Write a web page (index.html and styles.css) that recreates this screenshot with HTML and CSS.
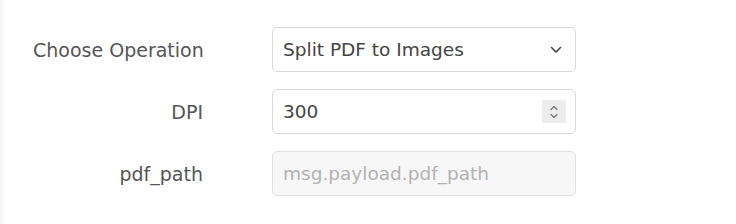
FILE: index.html
```html
<!DOCTYPE html>
<html>
	<head>
		<meta charset="UTF-8">
		<title>Split PDF</title>
		<link rel="stylesheet" href="styles.css">
	</head>
	<body>
		<div class="form">
			<label class="form-label">Choose Operation</label>
			<div class="form-field form-select">
				<span class="field-text">Split PDF to Images</span>
				<svg class="select-arrow" width="12" height="8" viewBox="0 0 12 8">
					<path d="M1.5 1.5 L6 6 L10.5 1.5" fill="none" stroke="#444" stroke-width="1.6" stroke-linecap="round" stroke-linejoin="round"/>
				</svg>
			</div>

			<label class="form-label">DPI</label>
			<div class="form-field">
				<span class="field-text">300</span>
				<span class="spinner">
					<svg width="10" height="18" viewBox="0 0 10 18">
						<path d="M2 6.5 L5 3.5 L8 6.5" fill="none" stroke="#777" stroke-width="1.3" stroke-linecap="round" stroke-linejoin="round"/>
						<path d="M2 11.5 L5 14.5 L8 11.5" fill="none" stroke="#777" stroke-width="1.3" stroke-linecap="round" stroke-linejoin="round"/>
					</svg>
				</span>
			</div>

			<label class="form-label">pdf_path</label>
			<div class="form-field disabled">
				<span class="field-text placeholder">msg.payload.pdf_path</span>
			</div>
		</div>
	</body>
</html>
```

FILE: styles.css
```css
html,body,div,span,label {
	margin: 0;
	padding: 0;
}
body {
	background-color: #fff;
	border-left: 3px solid #f6f6f6;
	font-family: "DejaVu Sans", sans-serif;
	color: #555;
	height: 224px;
	box-sizing: border-box;
}

.form {
	display: grid;
	grid-template-columns: 170px 304px;
	column-gap: 69px;
	row-gap: 17px;
	padding-top: 27px;
	padding-left: 30px;
}
.form .form-label {
	font-size: 19px;
	text-align: right;
	align-self: center;
	color: #555;
	white-space: nowrap;
}
.form .form-field {
	height: 45px;
	box-sizing: border-box;
	border: 1px solid #dadada;
	border-radius: 5px;
	padding: 0 9px 0 10px;
	display: flex;
	align-items: center;
	justify-content: space-between;
	background-color: #fff;
}
.form .form-field.disabled {
	background-color: #f7f7f7;
	border-color: #e0e0e0;
}
.form .field-text {
	font-size: 18.5px;
	color: #444;
	white-space: nowrap;
}
.form .field-text.placeholder {
	color: #b2b2b2;
}
.form .select-arrow {
	margin-right: 4px;
}
.form .spinner {
	width: 24px;
	height: 23px;
	background-color: #ececec;
	display: flex;
	align-items: center;
	justify-content: center;
}
```
